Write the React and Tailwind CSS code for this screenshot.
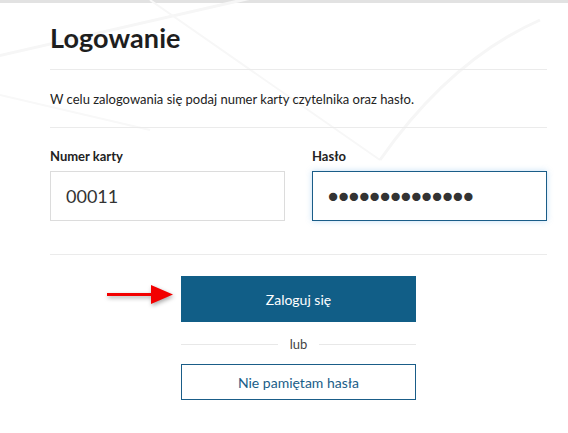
import React from 'react';

const Arrow = () => (
  <svg width="72" height="24" viewBox="0 0 72 24" className="absolute left-[104px] top-[283px]" style={{ filter: 'drop-shadow(1px 2px 2px rgba(0,0,0,0.35))' }}>
    <rect x="3" y="10" width="46" height="3" fill="#f20000" />
    <polygon points="47,2 69,11.5 47,21" fill="#f20000" />
  </svg>
);

const App = () => {
  return (
    <div className="relative w-[568px] h-[433px] bg-white overflow-hidden text-[#222]" style={{ fontFamily: 'Lato, "Open Sans", sans-serif' }}>
      <div className="h-[3px] bg-[#e2e2e2]" />
      {/* faint background streaks */}
      <svg className="absolute inset-0 pointer-events-none" width="568" height="433">
        <path d="M-20 60 L330 -20" stroke="#f6f6f6" strokeWidth="3" fill="none" />
        <path d="M0 95 L150 130" stroke="#f8f8f8" strokeWidth="2" fill="none" />
        <path d="M150 0 L380 160" stroke="#f7f7f7" strokeWidth="2" fill="none" />
        <path d="M540 20 Q450 60 380 160" stroke="#f6f6f6" strokeWidth="3" fill="none" />
      </svg>

      <div className="relative ml-[50px] w-[497px]">
        <h1 className="pt-[17px] text-[27px] font-bold leading-[36px] tracking-[0.1px] text-[#1e1e1e]">Logowanie</h1>
        <div className="mt-[13px] h-px bg-[#ebebeb]" />
        <p className="mt-[21px] text-[13px] leading-[16px] text-[#222]">W celu zalogowania się podaj numer karty czytelnika oraz hasło.</p>
        <div className="mt-[20px] h-px bg-[#ebebeb]" />

        <div className="mt-[20px] flex gap-[27px]">
          <label className="flex flex-col w-[235px]">
            <span className="text-[13px] font-bold leading-[16px] text-[#222]">Numer karty</span>
            <div className="mt-[7px] h-[50px] border border-[#dcdcdc] flex items-center px-[15px] text-[18px] text-[#333]">00011</div>
          </label>
          <label className="flex flex-col w-[235px]">
            <span className="text-[13px] font-bold leading-[16px] text-[#222]">Hasło</span>
            <div className="mt-[7px] h-[50px] border-[1.5px] border-[#1a5d88] shadow-[0_0_6px_rgba(80,160,230,0.35)] flex items-center pl-[15px] text-[17px] tracking-[0.2px] text-[#333]">●●●●●●●●●●●●●●</div>
          </label>
        </div>

        <div className="mt-[33px] h-px bg-[#ebebeb]" />

        <div className="ml-[131px] w-[235px] flex flex-col">
          <button className="mt-[21px] h-[46px] bg-[#115e87] text-white text-[14px]">Zaloguj się</button>
          <div className="mt-[14px] flex items-center gap-[12px]">
            <div className="flex-1 h-px bg-[#e8e8e8]" />
            <span className="text-[13px] text-[#444] leading-[16px]">lub</span>
            <div className="flex-1 h-px bg-[#e8e8e8]" />
          </div>
          <button className="mt-[12px] h-[36px] border-[1.5px] border-[#1a5d88] text-[#1a5d88] text-[14px] bg-white">Nie pamiętam hasła</button>
        </div>
      </div>

      <Arrow />
    </div>
  );
};

export default App;
